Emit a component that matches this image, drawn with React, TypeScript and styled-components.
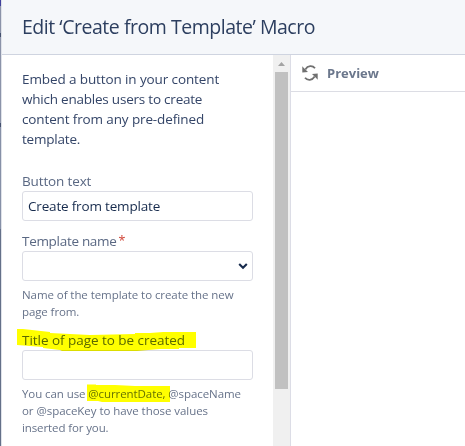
import React from "react";
import styled, { createGlobalStyle } from "styled-components";

const Global = createGlobalStyle`
  * { box-sizing: border-box; }
  html, body { margin: 0; background: #fff; overflow: hidden; }
  body { font-family: "Open Sans", "Noto Sans", sans-serif; color: #344563; }
`;

const Page = styled.div`
  display: flex;
  width: 465px;
  height: 446px;
  overflow: hidden;
`;

const Backdrop = styled.div`
  flex: none;
  width: 2px;
  border-right: 1px solid #dfe2e9;
  background: linear-gradient(#40409c 0 6px, #8b93a9 6px 33px, #44506e 33px 37px, #8b93a9 37px 123px, #44506e 123px 127px, #8690a7 127px 229px, #647089 229px);
`;

const Dialog = styled.div`
  flex: 1;
  display: flex;
  flex-direction: column;
  min-width: 0;
`;

const Header = styled.header`
  flex: none;
  height: 55px;
  padding: 13px 0 0 20px;
  background: #f5f7fa;
  border-bottom: 1px solid #cfd4e0;
`;

const Body = styled.div`
  flex: 1;
  display: flex;
  min-height: 0;
`;

const Form = styled.div`
  width: 271px;
  padding: 14px 20px 0;
`;

const Line = styled.span<{ $track?: number }>`
  display: block;
  width: max-content;
  white-space: pre;
  letter-spacing: ${(p) => p.$track ?? 0}px;
`;

const Title = styled.h1`
  margin: 0;
  font-size: 19.5px;
  line-height: 28px;
  font-weight: 400;
  color: #2c3e5f;
`;

const Intro = styled.div`
  height: 102px;
  font-size: 13.5px;
  line-height: 20px;
  color: #344568;
`;

const Label = styled.label`
  display: flex;
  height: 20px;
  font-size: 13.5px;
  line-height: 20px;
  color: #5a6883;
`;

const Required = styled.span`
  margin-left: 2px;
  font-size: 12.5px;
  color: #d04437;
`;

const Field = styled.div`
  display: flex;
  align-items: center;
  justify-content: space-between;
  width: 231px;
  height: 30px;
  padding: 0 4px 0 5px;
  border: 1px solid #dcdde5;
  border-radius: 3px;
  font-size: 13.5px;
  color: #172b4d;
`;

const Gap = styled.div<{ $h: number }>`
  height: ${(p) => p.$h}px;
`;

const Help = styled.div`
  position: relative;
  padding-top: 5px;
  font-size: 11.5px;
  line-height: 17px;
  color: #67738a;
`;

const TitleGroup = styled.div`
  position: relative;
`;

const Marker = styled.svg`
  position: absolute;
  left: -5px;
  top: -3px;
  mix-blend-mode: multiply;
  pointer-events: none;
`;

const Scrollbar = styled.div`
  display: flex;
  flex-direction: column;
  align-items: center;
  width: 17px;
  background: #f0f0f0;
`;

const ScrollArrow = styled.svg`
  display: block;
  height: 17px;
`;

const Thumb = styled.div`
  width: 13px;
  height: 317px;
  background: #c1c1c1;
`;

const Preview = styled.section`
  flex: 1;
  border-left: 1px solid #dcdde6;
`;

const PreviewBar = styled.div`
  display: flex;
  align-items: center;
  gap: 9px;
  height: 37px;
  padding-left: 11px;
  border-bottom: 1px solid #dcdde4;
  font-size: 13px;
  font-weight: 700;
  color: #6b778c;
`;

export default function App() {
  return (
    <Page>
      <Global />
      <Backdrop />
      <Dialog>
        <Header>
          <Title><Line $track={-0.47}>Edit ‘Create from Template’ Macro</Line></Title>
        </Header>
        <Body>
          <Form>
            <Intro>
              <Line $track={-0.11}>Embed a button in your content</Line>
              <Line $track={-0.22}>which enables users to create</Line>
              <Line $track={-0.13}>content from any pre-defined</Line>
              <Line $track={-0.2}>template.</Line>
            </Intro>
            <Label><Line $track={-0.14}>Button text</Line></Label>
            <Field><Line $track={-0.18}>Create from template</Line></Field>
            <Gap $h={10} />
            <Label><Line $track={-0.3}>Template name</Line><Required>*</Required></Label>
            <Field>
              <span />
              <svg width="10" height="8" viewBox="0 0 10 8">
                <path d="M1.2 2 L5 5.7 L8.8 2" fill="none" stroke="#172b4d" strokeWidth="2.1" />
              </svg>
            </Field>
            <Help>
              <Line $track={-0.07}>Name of the template to create the new</Line>
              <Line $track={-0.1}>page from.</Line>
            </Help>
            <Gap $h={10} />
            <TitleGroup>
              <Label><Line $track={-0.04}>Title of page to be created</Line></Label>
              <Field />
              <Help>
                <Line $track={-0.08}>You can use @currentDate, @spaceName</Line>
                <Line $track={-0.05}>or @spaceKey to have those values</Line>
                <Line $track={-0.11}>inserted for you.</Line>
              </Help>
              <Marker width="180" height="76" viewBox="17 327 180 76">
                <path
                  fill="#ffff00"
                  d="M17 329H23L50 332V333L90 335L135 334V333H150L163 332H196V348H179V349H160L137 351H62L60 350L43 348V347L17 345ZM87 384.5H96V385L115 385L135 386H170V402H102L98 401H87Z"
                />
              </Marker>
            </TitleGroup>
          </Form>
          <Scrollbar>
            <ScrollArrow width="9" height="17" viewBox="0 0 9 17">
              <path d="M1 11L4.5 7L8 11Z" fill="#a3a3a3" />
            </ScrollArrow>
            <Thumb />
          </Scrollbar>
          <Preview>
            <PreviewBar>
              <svg width="16" height="16" viewBox="0 0 16 16">
                <g fill="none" stroke="#707070" strokeWidth="1.8">
                  <path d="M13 3.3C10.5 .2 5.8 .4 3.3 4.4" />
                  <path d="M3 12.7C5.5 15.8 10.2 15.6 12.7 11.6" />
                </g>
                <path d="M.3 1.2V7.5L6 7L4.2 5.3L2.6 3.8ZM15.7 14.8V8.5L10 9L11.8 10.7L13.4 12.2Z" fill="#707070" />
              </svg>
              <Line>Preview</Line>
            </PreviewBar>
          </Preview>
        </Body>
      </Dialog>
    </Page>
  );
}
